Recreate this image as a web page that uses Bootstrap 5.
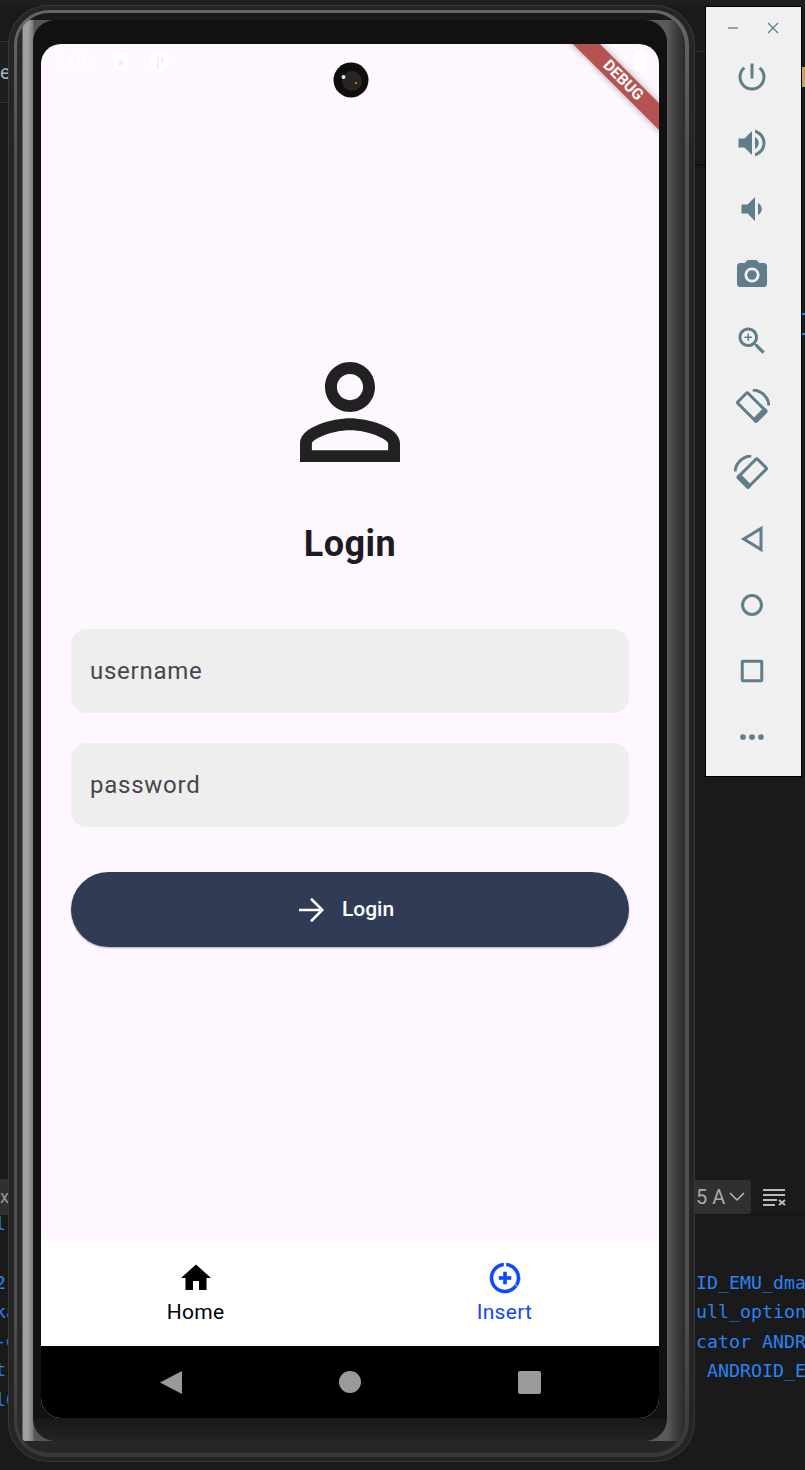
<!DOCTYPE html>
<html lang="en">
<head>
    <meta charset="UTF-8">
    <meta name="viewport" content="width=device-width, initial-scale=1.0">
    <title>Login</title>
    <link href="https://cdn.jsdelivr.net/npm/bootstrap@5.3.0/dist/css/bootstrap.min.css" rel="stylesheet">
    <style>
        body {
            width: 805px;
            height: 1470px;
            overflow: hidden;
            position: relative;
            background: #1a1a1a;
            font-family: Roboto, "Liberation Sans", sans-serif;
        }

        /* editor behind the emulator */
        .ide-top { height: 5px; background: #1f1f1f; }
        .ide-tab-left {
            position: absolute; left: 0; top: 41px; width: 10px; height: 62px;
            background: #1e1e1e;
            border-top: 1px solid #333; border-bottom: 1px solid #333;
            color: #9fb4c4; font-size: 20px; line-height: 60px; overflow: hidden;
        }
        .ide-panel-right {
            position: absolute; left: 690px; top: 51px; width: 15px; height: 115px;
            border-top: 1px solid #333; border-bottom: 2px solid #0f0f0f;
        }
        .ide-edge {
            position: absolute; left: 802px; top: 0; width: 3px; height: 400px;
            background: linear-gradient(to bottom, transparent 67px, #c9a060 67px, #c9a060 87px, transparent 87px, transparent 313px, #2a82f5 313px, #2a82f5 315px, transparent 315px, transparent 333px, #2a82f5 333px, #2a82f5 335px, transparent 335px);
        }
        .ide-code {
            position: absolute;
            font-family: "DejaVu Sans Mono", "Liberation Mono", monospace;
            font-size: 18.3px;
            line-height: 29.3px;
            color: #2a82f5;
            white-space: pre;
            overflow: hidden;
        }
        .ide-code-left { left: -5px; top: 1209px; width: 14px; }
        .ide-code-right { left: 685px; top: 1268px; width: 120px; }
        .ide-toolbar {
            position: absolute; left: 690px; top: 1179px; width: 115px; height: 36px;
            gap: 11px; border-bottom: 1px solid #141414;
        }
        .ide-select {
            width: 61px; height: 34px; background: #303030; border-radius: 3px;
            color: #aaa; font-size: 20px; padding-left: 6px; overflow: hidden;
        }
        .ide-left-bar {
            position: absolute; left: 0; top: 1179px; width: 9px; height: 36px;
            background: #303030; color: #999; font-size: 18px; line-height: 36px; overflow: hidden;
        }

        /* phone frame */
        .phone-shell {
            position: absolute; left: 8px; top: 5px; width: 687px; height: 1457px;
            padding: 5px 6px;
            border-radius: 40px;
            background: #252525;
            box-shadow: inset 0 0 0 1px #383838;
        }
        .phone-rim {
            height: 100%;
            padding: 3px 4px 4px 3px;
            border-radius: 35px;
            background: linear-gradient(to bottom, #666 0, #505050 10%, #505050 90%, #383838 100%);
        }
        .phone-band {
            height: 100%;
            padding: 7px 18px 12px 16px;
            border-radius: 32px;
            background:
                linear-gradient(to bottom, #1a1a1a 0, #1a1a1a 7px, transparent 7px, transparent calc(100% - 12px), #262626 calc(100% - 12px)),
                linear-gradient(to right, #2a2a2a 0, #2a2a2a 5px, #a0a0a0 6px, #a0a0a0 11px, #7a7a7a 16px, #555 17px, #5a5a5a calc(100% - 18px), #3c3c3c calc(100% - 8px), #2c2c2c 100%);
        }
        .phone-bezel {
            height: 100%;
            padding: 24px 8px 23px;
            border-radius: 22px;
            background: linear-gradient(to bottom, #111 0, #111 calc(100% - 23px), #181818 calc(100% - 23px), #232323 100%);
        }
        .phone-screen {
            position: relative;
            height: 100%;
            border-radius: 20px;
            overflow: hidden;
            background: #fef7ff;
        }

        /* status bar and debug strip */
        .status-left { position: absolute; left: 11px; top: 7px; color: #fff; font-size: 22px; font-weight: 300; line-height: 22px; gap: 21px; }
        .status-right { position: absolute; right: 12px; top: 8px; gap: 10px; }
        .punch-hole { position: absolute; left: 292px; top: 18px; }
        .debug-strip {
            position: absolute; left: 517px; top: 27px; width: 130px; height: 18.5px;
            transform: rotate(45deg);
            background: #b55252;
            box-shadow: 0 0 7px rgba(0, 0, 0, .35);
            color: #fff; font-size: 15.5px; font-weight: 700; line-height: 18.5px; text-align: center;
        }

        /* login form */
        .login-main { padding: 293px 30px 0; }
        .login-title { margin: 37px 0 65px; font-size: 36px; line-height: 40px; letter-spacing: .5px; font-weight: 700; color: #1d1b20; }
        .login-input.form-control {
            height: 84px; margin-bottom: 30px; padding: 0 19px;
            border: 0; border-radius: 16px;
            background: #eeeeee;
            font-size: 24px; letter-spacing: .75px; color: #444;
        }
        .login-input.form-control::placeholder { color: #49454f; opacity: 1; }
        .login-btn {
            height: 75px; margin-top: 45px; padding: 1px 13px 0 0; gap: 13px;
            border: 0; border-radius: 38px;
            background: #303c55;
            box-shadow: 0 1px 2px rgba(0, 0, 0, .3);
            color: #fff; font-size: 21px; font-weight: 500;
        }
        .login-btn:hover { background: #303c55; color: #fff; }

        /* bottom navigation */
        .tab-bar { height: 105px; background: #fff; }
        .tab-item { padding-top: 19px; font-size: 21px; line-height: 24px; letter-spacing: .3px; color: #000; }
        .tab-item svg { margin-bottom: 4px; }
        .tab-active { color: #0d47ff; }
        .system-nav { height: 72px; background: #000; gap: 155px; padding-right: 1px; }

        /* emulator side toolbar */
        .emu-toolbar {
            position: absolute; left: 705px; top: 6px; width: 97px; height: 771px;
            background: #f0f0f0;
            border: 1px solid #000;
        }
        .emu-head { height: 37px; padding: 5px 22px 0 21px; }
        .emu-btn { height: 66px; padding-right: 3px; }
        .emu-icon { width: 36px; height: 36px; fill: #607d8b; }
        .emu-line { fill: none; stroke: #607d8b; stroke-width: 2; }
    </style>
</head>
<body>
<div class="ide-top"></div>
<div class="ide-tab-left">e</div>
<div class="ide-panel-right"></div>
<div class="ide-edge"></div>
<div class="ide-left-bar">xc</div>
<div class="ide-code ide-code-left">l(

2
ka
-g
t
l0</div>
<div class="ide-toolbar d-flex align-items-center">
    <div class="ide-select d-flex align-items-center gap-1"><span>5&nbsp;A</span>
        <svg width="16" height="10" viewBox="0 0 16 10" fill="none" stroke="#bbb" stroke-width="1.5"><path d="M1 1l7 7 7-7"/></svg>
    </div>
    <svg width="24" height="18" viewBox="0 0 24 18" stroke="#bbb" stroke-width="2" fill="none"><path d="M1 2h22M1 7h22M1 12h14M1 17h12M17 12l6 5M23 12l-6 5"/></svg>
</div>
<div class="ide-code ide-code-right">DID_EMU_dma
full_option
ocator ANDR
  ANDROID_E</div>

<div class="phone-shell">
    <div class="phone-rim">
    <div class="phone-band">
        <div class="phone-bezel">
            <div class="phone-screen d-flex flex-column">
                <div class="flex-grow-1 login-main text-center">
                    <svg class="d-block mx-auto" width="150" height="150" viewBox="0 0 24 24" fill="#212121"><path d="M12 5.9c1.16 0 2.1.94 2.1 2.1s-.94 2.1-2.1 2.1S9.9 9.16 9.9 8s.94-2.1 2.1-2.1m0 9c2.97 0 6.1 1.46 6.1 2.1v1.1H5.9V17c0-.64 3.13-2.1 6.1-2.1M12 4C9.79 4 8 5.79 8 8s1.79 4 4 4 4-1.79 4-4-1.79-4-4-4zm0 9c-2.67 0-8 1.34-8 4v3h16v-3c0-2.66-5.33-4-8-4z"/></svg>
                    <h1 class="login-title">Login</h1>
                    <form>
                        <input class="form-control login-input" type="text" placeholder="username">
                        <input class="form-control login-input" type="password" placeholder="password">
                        <button class="btn login-btn w-100 d-flex align-items-center justify-content-center" type="button">
                            <svg width="36" height="36" viewBox="0 0 24 24" fill="none" stroke="#fff" stroke-width="1.7"><path d="M4 12h15M12 4.500 19.500 12 12 19.500"/></svg>
                            <span>Login</span>
                        </button>
                    </form>
                </div>

                <div class="tab-bar d-flex">
                    <div class="tab-item flex-fill w-50 d-flex flex-column align-items-center">
                        <svg width="36" height="36" viewBox="0 0 24 24" fill="#000"><path d="M10 20v-6h4v6h5v-8h3L12 3 2 12h3v8z"/></svg>
                        <span>Home</span>
                    </div>
                    <div class="tab-item tab-active flex-fill w-50 d-flex flex-column align-items-center">
                        <svg width="36" height="36" viewBox="0 0 24 24" fill="#0d47ff" stroke="#0d47ff" stroke-width=".4"><path d="M11 8v3H8v2h3v3h2v-3h3v-2h-3V8h-2zm2-5.950v2.020c3.950.49 7 3.850 7 7.930 0 1.450-.39 2.790-1.060 3.950l1.460 1.460C21.400 15.840 22 13.990 22 12c0-5.180-3.950-9.450-9-9.950zM4 12c0-4.080 3.050-7.440 7-7.930V2.050C5.950 2.550 2 6.820 2 12c0 5.520 4.480 10 10 10 3.310 0 6.240-1.610 8.060-4.090l-1.460-1.460C17.150 18.300 14.750 20 12 20c-4.420 0-8-3.580-8-8z"/></svg>
                        <span>Insert</span>
                    </div>
                </div>

                <div class="system-nav d-flex align-items-center justify-content-center">
                    <svg width="24" height="24" viewBox="0 0 24 24" fill="#9a9a9a"><path d="M23 1v23L1 12.500z"/></svg>
                    <svg width="24" height="24" viewBox="0 0 24 24" fill="#9a9a9a"><circle cx="12" cy="12" r="11"/></svg>
                    <svg width="24" height="24" viewBox="0 0 24 24" fill="#9a9a9a"><rect x="1" y="1" width="23" height="23" rx="2"/></svg>
                </div>

                <!-- white status bar, nearly lost on the pale background -->
                <div class="status-left d-flex align-items-center">
                    <span>1:09</span>
                    <svg width="14" height="16" viewBox="0 0 14 16"><path fill="#fff" d="M0 0h14v16H0z"/><path fill="#eee" d="M7 5l3.500 6h-7z"/></svg>
                    <svg width="21" height="21" viewBox="0 0 21 21"><circle cx="10.500" cy="10.500" r="10" fill="#fff"/><path fill="#f2ecf4" d="M8 5h2v12H8zM12 5h2.500v6H12z"/></svg>
                </div>
                <div class="status-right d-flex align-items-start">
                    <svg width="21" height="19" viewBox="0 0 21 19" fill="#fff"><path d="M0 6.500C5.500 1 15.500 1 21 6.500L10.500 19z"/></svg>
                    <svg width="13" height="19" viewBox="0 0 13 19" fill="none" stroke="#fff" stroke-width="1.500"><path d="M12 1v17H1z"/></svg>
                    <svg width="12" height="19" viewBox="0 0 12 19" fill="#fff"><path d="M3.500 0h5v2H12v17H0V2h3.500z"/></svg>
                </div>
                <div class="debug-strip">DEBUG</div>
                <svg class="punch-hole" width="36" height="36" viewBox="0 0 36 36">
                    <circle cx="18" cy="18" r="17.500" fill="#0d0d0d"/>
                    <circle cx="19" cy="19" r="10" fill="#2a2420"/>
                    <circle cx="10.500" cy="15" r="2" fill="#dfe6e0"/>
                    <circle cx="23" cy="21" r="1" fill="#d98a2b"/>
                </svg>
            </div>
        </div>
    </div>
    </div>
</div>

<div class="emu-toolbar d-flex flex-column">
    <div class="emu-head d-flex align-items-center justify-content-between">
        <svg width="12" height="12" viewBox="0 0 12 12" stroke="#607d8b" stroke-width="1.300"><path d="M1 6h10"/></svg>
        <svg width="12" height="12" viewBox="0 0 12 12" stroke="#607d8b" stroke-width="1.300"><path d="M1 1l10 10M11 1L1 11"/></svg>
    </div>
    <div class="emu-btn d-flex align-items-center justify-content-center"><svg class="emu-icon" viewBox="0 0 24 24"><path d="M13 3h-2v10h2V3zm4.830 2.170l-1.420 1.420C17.990 7.860 19 9.810 19 12c0 3.870-3.130 7-7 7s-7-3.130-7-7c0-2.190 1.010-4.140 2.580-5.420L6.170 5.170C4.230 6.820 3 9.260 3 12c0 4.970 4.030 9 9 9s9-4.030 9-9c0-2.740-1.230-5.180-3.170-6.830z"/></svg></div>
    <div class="emu-btn d-flex align-items-center justify-content-center"><svg class="emu-icon" viewBox="0 0 24 24"><path d="M3 9v6h4l5 5V4L7 9H3zm13.500 3c0-1.770-1.020-3.290-2.500-4.030v8.050c1.480-.73 2.500-2.250 2.500-4.020zM14 3.230v2.060c2.890.86 5 3.540 5 6.710s-2.110 5.850-5 6.710v2.060c4.010-.91 7-4.490 7-8.770s-2.990-7.860-7-8.770z"/></svg></div>
    <div class="emu-btn d-flex align-items-center justify-content-center"><svg class="emu-icon" viewBox="0 0 24 24"><path d="M18.500 12c0-1.770-1.020-3.290-2.500-4.030v8.050c1.480-.73 2.500-2.250 2.500-4.020zM5 9v6h4l5 5V4L9 9H5z"/></svg></div>
    <div class="emu-btn d-flex align-items-center justify-content-center"><svg class="emu-icon" viewBox="0 0 24 24"><circle cx="12" cy="12" r="3.200"/><path d="M9 2 7.170 4H4c-1.100 0-2 .9-2 2v12c0 1.100.9 2 2 2h16c1.100 0 2-.9 2-2V6c0-1.100-.9-2-2-2h-3.170L15 2H9zm3 15c-2.760 0-5-2.240-5-5s2.240-5 5-5 5 2.240 5 5-2.240 5-5 5z"/></svg></div>
    <div class="emu-btn d-flex align-items-center justify-content-center"><svg class="emu-icon" viewBox="0 0 24 24"><path d="M15.500 14h-.79l-.28-.27C15.410 12.590 16 11.110 16 9.500 16 5.910 13.090 3 9.500 3S3 5.910 3 9.500 5.910 16 9.500 16c1.610 0 3.090-.59 4.230-1.570l.27.28v.79l5 4.990L20.490 19l-4.990-5zm-6 0C7.010 14 5 11.990 5 9.500S7.010 5 9.500 5 14 7.010 14 9.500 11.990 14 9.500 14zM12 10h-2v2H9v-2H7V9h2V7h1v2h2v1z"/></svg></div>
    <div class="emu-btn d-flex align-items-center justify-content-center"><svg class="emu-icon" viewBox="0 0 24 24"><g transform="rotate(-45 11.800 12)"><rect class="emu-line" x="7" y="3" width="9.600" height="18" rx=".8"/><rect x="6" y="18" width="11.600" height="3.500" rx=".8" fill="#607d8b"/></g><path class="emu-line" stroke-width="1.300" d="M12.500.6A11.300 11.300 0 0 1 23.300 11"/></svg></div>
    <div class="emu-btn d-flex align-items-center justify-content-center"><svg class="emu-icon" viewBox="0 0 24 24"><g transform="translate(24 0) scale(-1 1)"><g transform="rotate(-45 11.800 12)"><rect class="emu-line" x="7" y="3" width="9.600" height="18" rx=".8"/><rect x="6" y="18" width="11.600" height="3.500" rx=".8" fill="#607d8b"/></g><path class="emu-line" stroke-width="1.300" d="M12.500.6A11.300 11.300 0 0 1 23.300 11"/></g></svg></div>
    <div class="emu-btn d-flex align-items-center justify-content-center"><svg class="emu-icon" viewBox="0 0 24 24"><path class="emu-line" stroke-width="1.600" d="M18 5v14L6.500 12z"/></svg></div>
    <div class="emu-btn d-flex align-items-center justify-content-center"><svg class="emu-icon" viewBox="0 0 24 24"><circle class="emu-line" stroke-width="1.600" cx="12" cy="12" r="6.300"/></svg></div>
    <div class="emu-btn d-flex align-items-center justify-content-center"><svg class="emu-icon" viewBox="0 0 24 24"><rect class="emu-line" stroke-width="1.600" x="5.500" y="5.500" width="13" height="13" rx=".5"/></svg></div>
    <div class="emu-btn d-flex align-items-center justify-content-center"><svg class="emu-icon" viewBox="0 0 24 24"><circle cx="6" cy="12" r="1.900"/><circle cx="12" cy="12" r="1.900"/><circle cx="18" cy="12" r="1.900"/></svg></div>
</div>

<script src="https://cdn.jsdelivr.net/npm/bootstrap@5.3.0/dist/js/bootstrap.bundle.min.js"></script>
</body>
</html>
